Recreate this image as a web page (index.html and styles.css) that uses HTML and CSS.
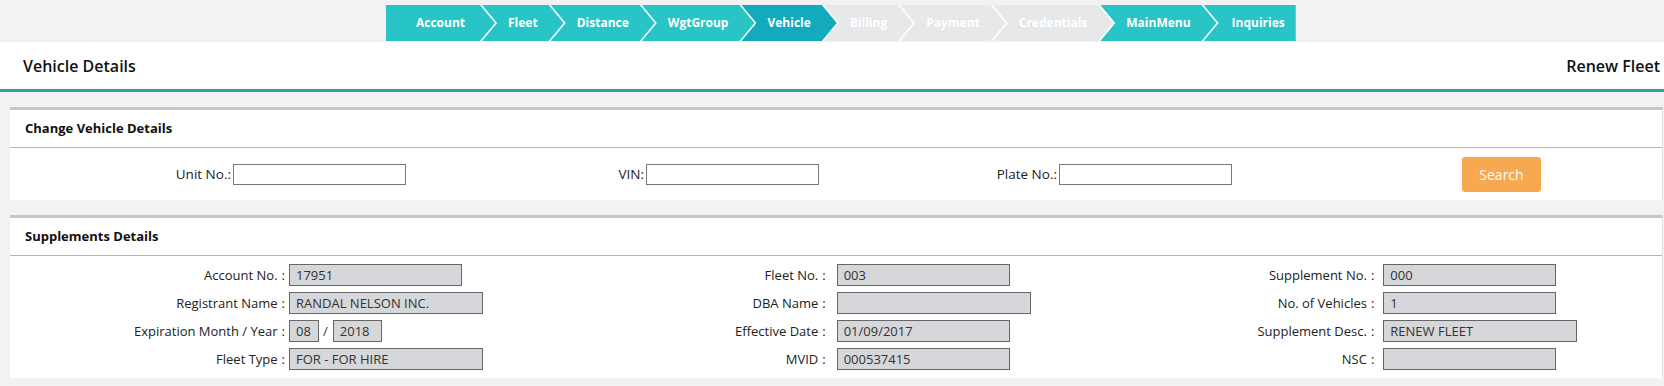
FILE: index.html
```html
<!DOCTYPE html>
<html>
<head>
    <title>Vehicle Details</title>
    <link rel="stylesheet" href="styles.css">
</head>
<body>
    <nav class="wizard">
        <ul class="steps">
            <li class="step first">Account</li>
            <li class="step">Fleet</li>
            <li class="step">Distance</li>
            <li class="step">WgtGroup</li>
            <li class="step active">Vehicle</li>
            <li class="step off">Billing</li>
            <li class="step off">Payment</li>
            <li class="step off">Credentials</li>
            <li class="step">MainMenu</li>
            <li class="step last">Inquiries</li>
        </ul>
    </nav>

    <header class="page-head">
        <h1>Vehicle Details</h1>
        <span class="mode">Renew Fleet</span>
    </header>

    <main class="content">
        <section class="panel">
            <h2 class="panel-title">Change Vehicle Details</h2>
            <div class="search-row">
                <div class="search-field"><label>Unit No.:</label><input type="text" class="box"></div>
                <div class="search-field"><label>VIN:</label><input type="text" class="box"></div>
                <div class="search-field"><label>Plate No.:</label><input type="text" class="box"></div>
                <div class="search-action"><button class="btn-search">Search</button></div>
            </div>
        </section>

        <section class="panel">
            <h2 class="panel-title">Supplements Details</h2>
            <div class="supp-grid">
                <div class="supp-col col-a">
                    <div class="field"><label>Account No.<span class="colon">:</span></label><span class="ro w-sm">17951</span></div>
                    <div class="field"><label>Registrant Name<span class="colon">:</span></label><span class="ro w-lg">RANDAL NELSON INC.</span></div>
                    <div class="field"><label>Expiration Month / Year<span class="colon">:</span></label>
                        <div class="date-pair"><span class="ro w-mm">08</span><span class="slash">/</span><span class="ro w-yy">2018</span></div>
                    </div>
                    <div class="field"><label>Fleet Type<span class="colon">:</span></label><span class="ro w-lg">FOR - FOR HIRE</span></div>
                </div>
                <div class="supp-col col-b">
                    <div class="field"><label>Fleet No.<span class="colon">:</span></label><span class="ro w-sm">003</span></div>
                    <div class="field"><label>DBA Name<span class="colon">:</span></label><span class="ro w-lg"></span></div>
                    <div class="field"><label>Effective Date<span class="colon">:</span></label><span class="ro w-sm">01/09/2017</span></div>
                    <div class="field"><label>MVID<span class="colon">:</span></label><span class="ro w-sm">000537415</span></div>
                </div>
                <div class="supp-col col-c">
                    <div class="field"><label>Supplement No.<span class="colon">:</span></label><span class="ro w-sm">000</span></div>
                    <div class="field"><label>No. of Vehicles<span class="colon">:</span></label><span class="ro w-sm">1</span></div>
                    <div class="field"><label>Supplement Desc.<span class="colon">:</span></label><span class="ro w-lg">RENEW FLEET</span></div>
                    <div class="field"><label>NSC<span class="colon">:</span></label><span class="ro w-sm"></span></div>
                </div>
            </div>
        </section>
    </main>
</body>
</html>
```

FILE: styles.css
```css
body {
    margin: 0;
    background-color: #f2f2f3;
    font-family: "Open Sans", "Liberation Sans", sans-serif;
    color: #222;
}

/* wizard bar */
.wizard {
    height: 42px;
    padding-top: 5px;
    box-sizing: border-box;
}
.steps {
    display: flex;
    list-style: none;
    margin: 0 0 0 386px;
    padding: 0;
    width: max-content;
    background-color: #fff;
}
.step {
    height: 36px;
    line-height: 36px;
    padding: 0 26px;
    margin-left: -13px;
    font-size: 12px;
    font-weight: 700;
    color: #fff;
    background-color: #28c4c6;
    clip-path: polygon(0 0, calc(100% - 15px) 0, 100% 50%, calc(100% - 15px) 100%, 0 100%, 15px 50%);
}
.step.first {
    margin-left: 0;
    padding: 0 30px;
    clip-path: polygon(0 0, calc(100% - 15px) 0, 100% 50%, calc(100% - 15px) 100%, 0 100%);
}
.step.last {
    padding: 0 11px 0 28px;
    clip-path: polygon(0 0, 100% 0, 100% 100%, 0 100%, 15px 50%);
}
.step.active {
    background-color: #14aabd;
}
.step.off {
    background-color: #e6e8ea;
}

/* page header */
.page-head {
    display: flex;
    justify-content: space-between;
    align-items: center;
    height: 47px;
    padding: 0 4px 0 23px;
    background-color: #fff;
    border-bottom: 3px solid #2ea596;
}
.page-head h1 {
    margin: 0;
    font-size: 16px;
    font-weight: 600;
    color: #111;
}
.mode {
    font-size: 16px;
    font-weight: 600;
    color: #111;
}

/* panels */
.content {
    padding: 15px 1px 8px 10px;
}
.panel {
    background-color: #fff;
    border-top: 3px solid #c6c7c9;
    border-right: 1px solid #e4e4e4;
}
.panel + .panel {
    margin-top: 15px;
}
.panel-title {
    margin: 0;
    height: 37px;
    line-height: 37px;
    padding-left: 15px;
    font-size: 13px;
    font-weight: 700;
    color: #111;
    border-bottom: 1px solid #b5b5b5;
}

/* search row */
.search-row {
    display: grid;
    grid-template-columns: repeat(4, 1fr);
    align-items: center;
    height: 52px;
}
.search-field {
    display: flex;
    justify-content: flex-end;
    align-items: center;
    padding-right: 17px;
    font-size: 13.5px;
}
.search-field label {
    margin-right: 2px;
}
.box {
    width: 173px;
    height: 21px;
    box-sizing: border-box;
    border: 1px solid #777;
    padding: 0 4px;
    font-family: inherit;
}
.search-action {
    padding-left: 213px;
}
.btn-search {
    width: 79px;
    height: 35px;
    border: none;
    border-radius: 3px;
    background-color: #f8a84f;
    color: #fff;
    font-family: inherit;
    font-size: 14px;
}

/* supplements */
.supp-grid {
    display: grid;
    grid-template-columns: repeat(3, 1fr);
    padding: 8px 0 8px;
}
.supp-col {
    display: flex;
    flex-direction: column;
    gap: 6px;
}
.field {
    display: flex;
    align-items: center;
    height: 22px;
    font-size: 13px;
}
.field label {
    text-align: right;
    flex: none;
}
.colon {
    margin-left: 4px;
}
.col-a label { width: 275px; margin-right: 4px; }
.col-b label { width: 265px; margin-right: 11px; }
.col-c label { width: 263px; margin-right: 9px; }

.ro {
    display: block;
    height: 22px;
    line-height: 20px;
    box-sizing: border-box;
    padding-left: 6px;
    border: 1px solid #666;
    background-color: #d5d7da;
    color: #333;
    font-size: 13px;
    white-space: nowrap;
}
.w-sm { width: 173px; }
.w-lg { width: 194px; }
.w-mm { width: 30px; }
.w-yy { width: 49px; }
.date-pair {
    display: flex;
    align-items: center;
}
.slash {
    margin: 0 5px 0 4px;
    color: #333;
}
```
